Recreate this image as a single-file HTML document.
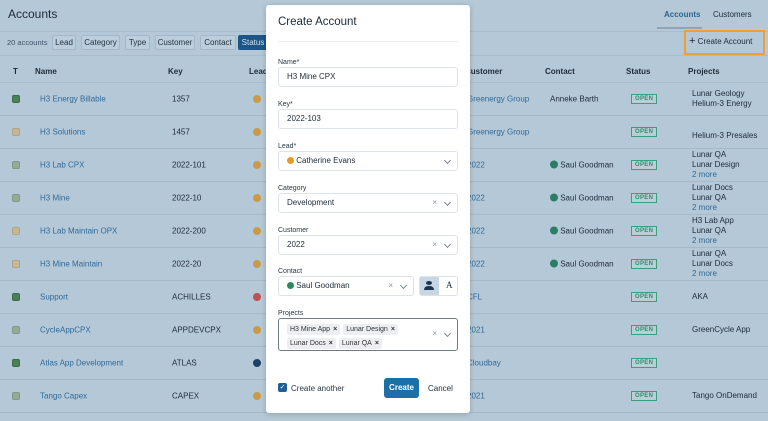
<!DOCTYPE html>
<html><head><meta charset="utf-8"><style>
*{box-sizing:border-box;margin:0;padding:0}
body{width:768px;height:421px;overflow:hidden;background:#b5c8d7;font-family:"Liberation Sans",sans-serif;color:#1e2b38;position:relative;font-size:8px}
.a{position:absolute;white-space:nowrap}
.chip{position:absolute;top:35px;height:15px;border:1px solid #a6b8c7;border-radius:2px;background:#bccedc;font-size:8px;line-height:13px;text-align:center;color:#243240}
.hd{position:absolute;top:67px;font-weight:bold;font-size:8px}
.row{position:absolute;left:0;width:768px;height:33px;border-bottom:1px solid #a5b9c9}
.c{position:absolute;top:50%;transform:translateY(-50%);white-space:nowrap;font-size:8px}
.lk{color:#2f6a99}
.t{width:8px;height:8px;border-radius:2px;left:12px}
.tb{background:#4b7f57;border:1px solid #3c6b47}
.tc{background:#93ab98;border:1px solid #7f9a84}
.tp{background:#c5b896;border:1px solid #b0a37f}
.av{width:8px;height:8px;border-radius:50%;left:253px}
.open{left:631px;border:1px solid #3e9c7f;color:#2f8e70;font-size:6px;font-weight:bold;padding:1px 3px;background:#b9cfd5;letter-spacing:.3px}
.pr{left:692px;line-height:10px}
.modal{position:absolute;left:266px;top:5px;width:204px;height:408px;background:#fff;border-radius:3px;box-shadow:0 1px 6px rgba(0,0,0,.2)}
.lb{position:absolute;left:12px;font-size:7px;color:#2b3744}
.in{position:absolute;left:12px;width:180px;height:20px;border:1px solid #dde3e9;border-radius:3px;font-size:8px;line-height:18px;padding-left:8px;color:#1e2b38}
.x{position:absolute;right:20px;color:#8a96a2;font-size:8px}
.v{position:absolute;right:7px;top:6px;width:5px;height:5px;border-right:1px solid #7a8794;border-bottom:1px solid #7a8794;transform:rotate(45deg)}
.tag{display:inline-block;background:#eceef1;border-radius:2px;font-size:7px;padding:0 3px;line-height:11px;margin-right:3px;color:#333}
.tag b{font-size:7px;margin-left:3px}
</style></head><body>
<div class="a" style="left:8px;top:7px;font-size:12px;color:#1e2b38">Accounts</div>
<div class="a" style="left:664px;top:10px;font-size:8px;font-weight:bold;color:#2c6591">Accounts</div>
<div class="a" style="left:713px;top:10px;font-size:8px;color:#1e2b38">Customers</div>
<div class="a" style="left:657px;top:27px;width:45px;height:2px;background:#8fa4b5"></div>
<div class="a" style="left:0;top:31px;width:768px;height:1px;background:#a9bccb"></div>
<div class="a" style="left:7px;top:38px;font-size:7.5px;color:#3d5468">20 accounts</div>
<div class="chip" style="left:52px;width:24px">Lead</div>
<div class="chip" style="left:81px;width:39px">Category</div>
<div class="chip" style="left:125px;width:25px">Type</div>
<div class="chip" style="left:155px;width:40px">Customer</div>
<div class="chip" style="left:200px;width:36px">Contact</div>
<div class="chip" style="left:238px;width:30px;background:#1d5686;color:#cfe0ee;border-color:#1d5686">Status</div>
<div class="a" style="left:684px;top:30px;width:81px;height:25px;border:2px solid #f0a030"></div>
<div class="a" style="left:689px;top:37px;font-size:8px;color:#1e2b38"><span style="font-size:11px;line-height:8px">+</span> Create Account</div>
<div class="a" style="left:0;top:55px;width:768px;height:1px;background:#a9bccb"></div>
<div class="hd" style="left:13px">T</div><div class="hd" style="left:35px">Name</div><div class="hd" style="left:168px">Key</div><div class="hd" style="left:249px">Lead</div><div class="hd" style="left:465px">Customer</div><div class="hd" style="left:545px">Contact</div><div class="hd" style="left:626px">Status</div><div class="hd" style="left:688px">Projects</div>
<div class="a" style="left:0;top:82px;width:768px;height:1px;background:#a9bccb"></div>

<div class="row" style="top:83px"><div class="c t tb"></div><div class="c lk" style="left:40px">H3 Energy Billable</div><div class="c" style="left:172px">1357</div><div class="c av" style="background:#c99a4a"></div><div class="c lk" style="left:467px">Greenergy Group</div><div class="c" style="left:550px">Anneke Barth</div><div class="c open">OPEN</div><div class="c pr">Lunar Geology<br>Helium-3 Energy</div></div>
<div class="row" style="top:116px"><div class="c t tp"></div><div class="c lk" style="left:40px">H3 Solutions</div><div class="c" style="left:172px">1457</div><div class="c av" style="background:#c99a4a"></div><div class="c lk" style="left:467px">Greenergy Group</div><div class="c open">OPEN</div><div class="c pr" style="top:62%">Helium-3 Presales</div></div>
<div class="row" style="top:149px"><div class="c t tc"></div><div class="c lk" style="left:40px">H3 Lab CPX</div><div class="c" style="left:172px">2022-101</div><div class="c av" style="background:#c99a4a"></div><div class="c lk" style="left:467px">2022</div><div class="c" style="left:550px"><span style="display:inline-block;width:8px;height:8px;border-radius:50%;background:#2c7d68;vertical-align:-1px"></span> Saul Goodman</div><div class="c open">OPEN</div><div class="c pr">Lunar QA<br>Lunar Design<br><span class="lk">2 more</span></div></div>
<div class="row" style="top:182px"><div class="c t tc"></div><div class="c lk" style="left:40px">H3 Mine</div><div class="c" style="left:172px">2022-10</div><div class="c av" style="background:#c99a4a"></div><div class="c lk" style="left:467px">2022</div><div class="c" style="left:550px"><span style="display:inline-block;width:8px;height:8px;border-radius:50%;background:#2c7d68;vertical-align:-1px"></span> Saul Goodman</div><div class="c open">OPEN</div><div class="c pr">Lunar Docs<br>Lunar QA<br><span class="lk">2 more</span></div></div>
<div class="row" style="top:215px"><div class="c t tp"></div><div class="c lk" style="left:40px">H3 Lab Maintain OPX</div><div class="c" style="left:172px">2022-200</div><div class="c av" style="background:#c99a4a"></div><div class="c lk" style="left:467px">2022</div><div class="c" style="left:550px"><span style="display:inline-block;width:8px;height:8px;border-radius:50%;background:#2c7d68;vertical-align:-1px"></span> Saul Goodman</div><div class="c open">OPEN</div><div class="c pr">H3 Lab App<br>Lunar QA<br><span class="lk">2 more</span></div></div>
<div class="row" style="top:248px"><div class="c t tp"></div><div class="c lk" style="left:40px">H3 Mine Maintain</div><div class="c" style="left:172px">2022-20</div><div class="c av" style="background:#c99a4a"></div><div class="c lk" style="left:467px">2022</div><div class="c" style="left:550px"><span style="display:inline-block;width:8px;height:8px;border-radius:50%;background:#2c7d68;vertical-align:-1px"></span> Saul Goodman</div><div class="c open">OPEN</div><div class="c pr">Lunar QA<br>Lunar Docs<br><span class="lk">2 more</span></div></div>
<div class="row" style="top:281px"><div class="c t tb"></div><div class="c lk" style="left:40px">Support</div><div class="c" style="left:172px">ACHILLES</div><div class="c av" style="background:#c0504d"></div><div class="c lk" style="left:467px">CFL</div><div class="c open">OPEN</div><div class="c pr">AKA</div></div>
<div class="row" style="top:314px"><div class="c t tc"></div><div class="c lk" style="left:40px">CycleAppCPX</div><div class="c" style="left:172px">APPDEVCPX</div><div class="c av" style="background:#c99a4a"></div><div class="c lk" style="left:467px">2021</div><div class="c open">OPEN</div><div class="c pr">GreenCycle App</div></div>
<div class="row" style="top:347px"><div class="c t tb"></div><div class="c lk" style="left:40px">Atlas App Development</div><div class="c" style="left:172px">ATLAS</div><div class="c av" style="background:#1f3f66"></div><div class="c lk" style="left:467px">Cloudbay</div><div class="c open">OPEN</div></div>
<div class="row" style="top:380px"><div class="c t tc"></div><div class="c lk" style="left:40px">Tango Capex</div><div class="c" style="left:172px">CAPEX</div><div class="c av" style="background:#c99a4a"></div><div class="c lk" style="left:467px">2021</div><div class="c open">OPEN</div><div class="c pr">Tango OnDemand</div></div>

<div class="modal">
<div class="a" style="left:12px;top:11px;font-size:11.5px;color:#1e2b38">Create Account</div>
<div class="a" style="left:12px;top:36px;width:180px;height:1px;background:#e8ecef"></div>
<div class="lb" style="top:54px">Name*</div><div class="in" style="top:62px">H3 Mine CPX</div>
<div class="lb" style="top:96px">Key*</div><div class="in" style="top:104px">2022-103</div>
<div class="lb" style="top:138px">Lead*</div><div class="in" style="top:146px"><span style="display:inline-block;width:7px;height:7px;border-radius:50%;background:#e79a2a;vertical-align:-1px"></span> Catherine Evans<div class="v"></div></div>
<div class="lb" style="top:180px">Category</div><div class="in" style="top:188px">Development<span class="x">×</span><div class="v"></div></div>
<div class="lb" style="top:222px">Customer</div><div class="in" style="top:230px">2022<span class="x">×</span><div class="v"></div></div>
<div class="lb" style="top:263px">Contact</div><div class="in" style="top:271px;width:136px"><span style="display:inline-block;width:7px;height:7px;border-radius:50%;background:#2c8a5e;vertical-align:-1px"></span> Saul Goodman<span class="x">×</span><div class="v"></div></div>
<div class="a" style="left:153px;top:271px;width:39px;height:20px;border:1px solid #dde3e9;border-radius:3px"><div class="a" style="left:0;top:0;width:19px;height:18px;background:#c7d6e3"></div><div class="a" style="left:6px;top:4px;width:6px;height:4px;border-radius:50%;background:#1e3550"></div><div class="a" style="left:4px;top:9px;width:10px;height:4px;border-radius:4px 4px 0 0;background:#1e3550"></div><div class="a" style="left:26px;top:3px;font-size:9px;font-family:'Liberation Serif',serif">A</div></div>
<div class="lb" style="top:305px">Projects</div>
<div class="a" style="left:12px;top:313px;width:180px;height:33px;border:1px solid #6e7b88;border-radius:3px;padding:3px 0 0 8px;line-height:14px">
<span class="tag">H3 Mine App<b>×</b></span><span class="tag">Lunar Design<b>×</b></span><br><span class="tag">Lunar Docs<b>×</b></span><span class="tag">Lunar QA<b>×</b></span>
<span class="x" style="top:10px;font-size:8px;line-height:10px">×</span><div class="v" style="top:12px"></div></div>
<div class="a" style="left:12px;top:378px;width:9px;height:9px;background:#1f5e96;border-radius:2px;color:#fff;font-size:7px;line-height:9px;text-align:center">✓</div>
<div class="a" style="left:25px;top:379px;font-size:8px;color:#2b3744">Create another</div>
<div class="a" style="left:118px;top:373px;width:35px;height:20px;background:#1d6fa8;border-radius:3px;color:#fff;font-size:8px;font-weight:bold;line-height:20px;text-align:center">Create</div>
<div class="a" style="left:162px;top:379px;font-size:8px;color:#1e2b38">Cancel</div>
</div>
</body></html>
